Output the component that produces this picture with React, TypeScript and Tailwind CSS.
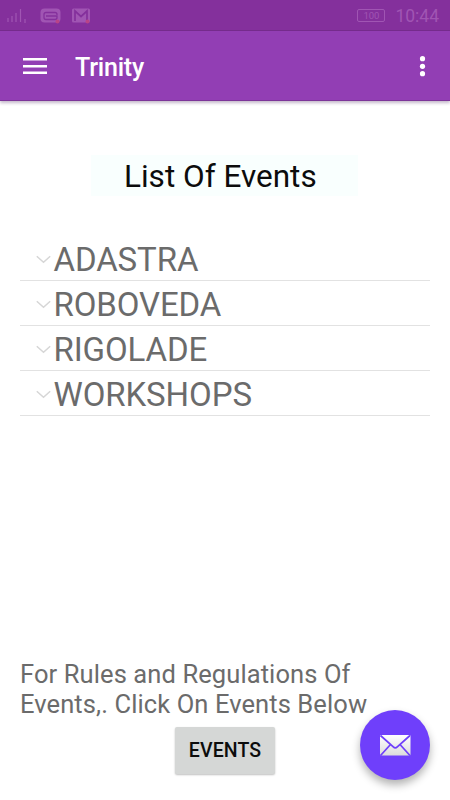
import React from 'react';

const events = ['ADASTRA', 'ROBOVEDA', 'RIGOLADE', 'WORKSHOPS'];

const StatusBar: React.FC = () => (
  <div className="flex h-[31px] items-center justify-between border-b border-[#772c8e] bg-[#84309c] pt-px pr-[11px] pl-[7px] text-[#a055b3]">
    <div className="flex items-center">
      <svg width="20" height="16" viewBox="0 0 20 16" stroke="currentColor" strokeWidth="1.2">
        <path d="M1 14v-4M5 14V8M9 14V5M13.5 14V1M18 15v-4" />
      </svg>
      <svg className="ml-[13px]" width="22" height="16" viewBox="0 0 22 16" fill="none">
        <rect x="0.5" y="0.5" width="20" height="14" rx="4" fill="currentColor" />
        <path d="M17 7V6.500a2 2 0 0 0-2-2H6a2 2 0 0 0-2 2v3a2 2 0 0 0 2 2h9a2 2 0 0 0 2-2V8H6" stroke="#84309c" strokeWidth="1.3" />
        <circle cx="17.5" cy="13.5" r="2" fill="#b84487" />
      </svg>
      <svg className="ml-[10px]" width="19" height="16" viewBox="0 0 19 16" fill="none">
        <rect x="0" y="0.5" width="18" height="14" rx="1.5" fill="currentColor" />
        <path d="M3 13V3l6 5.5L15 3v10" stroke="#84309c" strokeWidth="1.7" />
        <circle cx="15.5" cy="13.5" r="2" fill="#b84487" />
      </svg>
    </div>
    <div className="flex items-center">
      <span className="flex h-[13px] w-[28px] items-center justify-center rounded-xs border border-current text-[9.5px] leading-none">100</span>
      <span className="ml-[10px] pt-[2px] text-[17.5px] leading-none">10:44</span>
    </div>
  </div>
);

const Toolbar: React.FC = () => (
  <header className="flex h-[70px] items-center border-b border-[#7c3599] bg-[#923eb4] pr-[18px] pl-[23px] text-white shadow-[0_2px_3px_rgba(60,20,80,0.3)]">
    <button aria-label="Menu">
      <svg width="24" height="18" viewBox="0 0 24 18" stroke="currentColor" strokeWidth="2.4">
        <path d="M0 2.2h24M0 9.2h24M0 15.8h24" />
      </svg>
    </button>
    <h1 className="ml-[28px] flex-1 pt-[4px] text-[25px] font-medium leading-none tracking-[-0.2px]">Trinity</h1>
    <button aria-label="More">
      <svg width="19" height="22" viewBox="0 0 19 22" fill="currentColor">
        <circle cx="9.5" cy="3.7" r="2.6" />
        <circle cx="9.5" cy="11.3" r="2.6" />
        <circle cx="9.5" cy="18.7" r="2.6" />
      </svg>
    </button>
  </header>
);

const App: React.FC = () => {
  return (
    <div className="relative flex h-[800px] w-[450px] flex-col overflow-hidden bg-white font-['Roboto',sans-serif]">
      <StatusBar />
      <Toolbar />

      <main className="flex flex-1 flex-col px-5">
        <h2 className="mt-[54px] ml-[71px] flex h-[41px] w-[267px] items-center bg-[#f9fffe] pt-[3px] pl-[33px] text-[31.5px] leading-none whitespace-nowrap text-[#0c0c0c]">
          List Of Events
        </h2>

        <ul className="mt-10">
          {events.map((event) => (
            <li key={event} className="flex h-[45px] items-center border-b border-[#e2e2e2] pt-[3px] pl-4">
              <svg width="15" height="9" viewBox="0 0 15 9" fill="none" stroke="#d6d6d6" strokeWidth="1.5">
                <path d="M0.8 1.2l6.7 6 6.7-6" />
              </svg>
              <span className="ml-[2.5px] text-[33px] leading-none tracking-[-0.1px] text-[#6b6b6b]">{event}</span>
            </li>
          ))}
        </ul>

        <p className="mt-auto text-[25.5px] leading-[30px] tracking-[0.1px] whitespace-nowrap text-[#6b6b6b]">
          For Rules and Regulations Of
          <br />
          Events,. Click On Events Below
        </p>
        <button className="mt-2 mb-[26px] ml-[155px] h-[47px] w-[100px] rounded-xs bg-[#d5d7d6] pt-px text-[19.5px] font-medium tracking-[0.1px] text-[#0c0c0c] shadow-[0_1px_2px_rgba(0,0,0,0.25)]">
          EVENTS
        </button>
      </main>

      {/* Contact button */}
      <button
        aria-label="Email"
        className="absolute top-[710px] left-[360px] flex size-[70px] items-center justify-center rounded-full bg-[#6f3ffb] shadow-[0_5px_8px_rgba(0,0,0,0.3)]"
      >
        <svg width="32" height="22" viewBox="0 0 32 22" fill="none">
          <defs>
            <linearGradient id="paper" x1="0" y1="0" x2="0" y2="1">
              <stop offset="0" stopColor="#fff" />
              <stop offset="1" stopColor="#dcdcdc" />
            </linearGradient>
          </defs>
          <rect x="1" y="1" width="30.5" height="20.5" rx="1.2" fill="url(#paper)" />
          <path d="M1.5 1.5l12.800 11.300q2 2 4 0L31 1.500M1.500 21.500l10-11M31 21.500l-10-11" stroke="#6f3ffb" strokeWidth="1.7" />
        </svg>
      </button>
    </div>
  );
};

export default App;
